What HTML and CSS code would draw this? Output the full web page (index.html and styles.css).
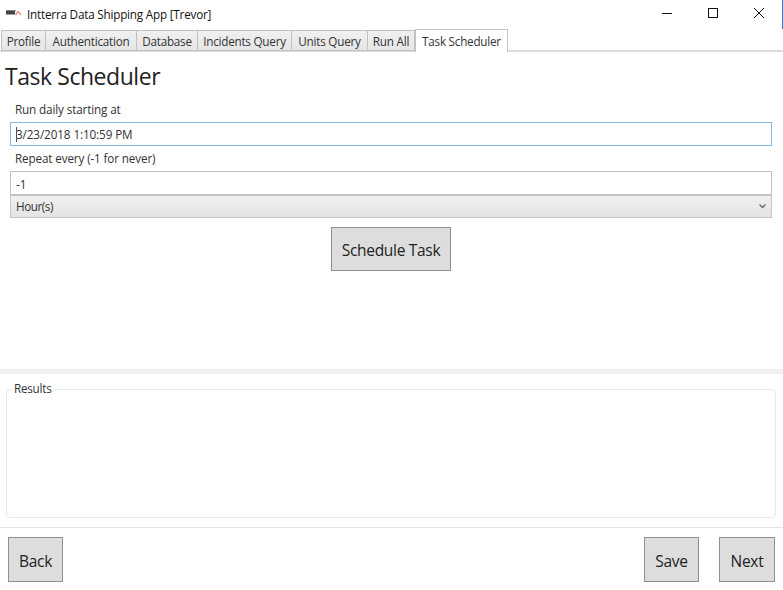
FILE: index.html
```html
<!DOCTYPE html>
<html lang="en">
<head>
<meta charset="utf-8">
<title>Intterra Data Shipping App</title>
<link rel="stylesheet" href="styles.css">
</head>
<body>
<div class="app">
  <header class="titlebar">
    <svg class="logo" width="16" height="8" viewBox="0 0 16 8"><rect x="0" y="1.500" width="9" height="4" fill="#444"/><rect x="0" y="1" width="10" height="1" fill="#888"/><path d="M9.500 6 L12 2.500 L15 6" fill="none" stroke="#ee8a78" stroke-width="1.300"/></svg>
    <span class="title">Intterra Data Shipping App [Trevor]</span>
    <div class="winctl">
      <svg class="winbtn" width="46" height="29" viewBox="0 0 46 29"><rect x="18" y="13" width="10" height="1" fill="#111"/></svg>
      <svg class="winbtn" width="46" height="29" viewBox="0 0 46 29"><rect x="18.500" y="8.500" width="9" height="9" fill="none" stroke="#111"/></svg>
      <svg class="winbtn" width="46" height="29" viewBox="0 0 46 29"><path d="M18 8 L28 18 M28 8 L18 18" stroke="#111" fill="none"/></svg>
    </div>
  </header>
  <nav class="tabs">
    <span class="tab tab-profile">Profile</span>
    <span class="tab tab-auth">Authentication</span>
    <span class="tab tab-db">Database</span>
    <span class="tab tab-incidents">Incidents Query</span>
    <span class="tab tab-units">Units Query</span>
    <span class="tab tab-run">Run All</span>
    <span class="tab active">Task Scheduler</span>
  </nav>
  <main class="content">
    <h1 class="heading">Task Scheduler</h1>
    <div class="form">
      <label class="label">Run daily starting at</label>
      <div class="field focused"><span class="caret"></span>3/23/2018 1:10:59 PM</div>
      <label class="label second">Repeat every (-1 for never)</label>
      <div class="field">-1</div>
      <div class="select">
        <span class="select-text">Hour(s)</span>
        <svg width="7" height="5" viewBox="0 0 7 5"><path d="M0.500 0.500 L3.500 3.500 L6.500 0.500" fill="none" stroke="#666" stroke-width="1.300"/></svg>
      </div>
    </div>
    <div class="action"><button class="btn schedule">Schedule Task</button></div>
  </main>
  <div class="splitter"></div>
  <fieldset class="results"><legend>Results</legend></fieldset>
  <footer class="footer">
    <button class="btn back">Back</button>
    <div class="footer-right">
      <button class="btn save">Save</button>
      <button class="btn next">Next</button>
    </div>
  </footer>
</div>
</body>
</html>
```
FILE: styles.css
```css
* { box-sizing: border-box; }
html, body { margin: 0; padding: 0; background: #fff; }
body { font-family: "Open Sans", "Noto Sans", sans-serif; color: #222; overflow: hidden; }
.app { width: 783px; height: 590px; display: flex; flex-direction: column; }
.titlebar { height: 29px; flex: none; display: flex; align-items: center; padding-left: 6px; padding-bottom: 2px; border-right: 1px solid #1883d7; color: #111; }
.logo { margin-right: 5px; margin-top: -2px; }
.title { font-size: 11.700px; letter-spacing: -0.200px; }
.winctl { margin-left: auto; display: flex; margin-top: 2px; }
.winbtn { display: block; }
.tabs { height: 23px; flex: none; display: flex; align-items: flex-end; padding-left: 1px; border-bottom: 2px solid #dcdcdc; }
.tab { height: 21px; margin-bottom: -1px; display: flex; align-items: center; justify-content: center; font-size: 11.700px; letter-spacing: -0.230px; color: #333; background: linear-gradient(#f0f0f0, #e6e6e6); border: 1px solid #c0c0c0; border-width: 1px 1px 1px 0; white-space: nowrap; }
.tab-profile { width: 45px; border-left-width: 1px; }
.tab-auth { width: 91px; }
.tab-db { width: 61px; }
.tab-incidents { width: 94px; }
.tab-units { width: 76px; }
.tab-run { width: 47px; }
.tab.active { width: 93px; height: 23px; margin-bottom: -2px; background: #fff; border: 1px solid #c4c4c4; border-bottom: 0; }
.content { height: 315px; flex: none; padding: 0 11px 0 10px; display: flex; flex-direction: column; }
.heading { margin: 10px 0 0 -5px; font-size: 23px; line-height: 28px; font-weight: 400; letter-spacing: -0.450px; color: #222; }
.form { display: flex; flex-direction: column; margin-top: 10px; }
.label { height: 20px; padding-left: 5px; font-size: 11.700px; line-height: 18px; letter-spacing: -0.130px; color: #333; }
.label.second { margin-top: 3px; height: 22px; line-height: 19px; }
.field { height: 24px; display: flex; align-items: center; padding-left: 5px; padding-top: 1px; font-size: 11.700px; letter-spacing: -0.100px; color: #333; background: #fff; border: 1px solid #c0c0c0; position: relative; }
.field.focused { border-color: #84b8e6; margin-top: 2px; padding-top: 0; }
.caret { position: absolute; left: 5px; top: 4px; width: 1px; height: 15px; background: #555; }
.select { height: 23px; display: flex; align-items: center; justify-content: space-between; padding: 0 5px; color: #333; background: linear-gradient(#f0f0f0, #e4e4e4); border: 1px solid #c6c6c6; }
.select-text { font-size: 11.700px; line-height: 15px; letter-spacing: -0.450px; }
.action { display: flex; justify-content: center; margin-top: 9px; }
.btn { font-family: inherit; font-size: 15.500px; letter-spacing: -0.300px; color: #222; background: #dddddd; border: 1px solid #8f8f8f; padding: 2px 0 0; height: 45px; }
.schedule { width: 120px; height: 44px; }
.splitter { height: 5px; flex: none; margin-top: 2px; background: #f0f0f0; }
.results { flex: none; height: 136px; margin: 8px 7px 0 6px; padding: 0; border: 1px solid #e4eaee; border-radius: 4px; }
.results legend { margin-left: 4px; padding: 0 3px 2px; font-size: 11.700px; line-height: 13px; letter-spacing: -0.250px; color: #333; }
.footer { flex: none; display: flex; justify-content: space-between; margin-top: 9px; padding: 9px 8px 0 8px; border-top: 1px solid #e2e2e2; }
.footer-right { display: flex; gap: 20px; }
.back, .save { width: 55px; }
.next { width: 56px; }
```
